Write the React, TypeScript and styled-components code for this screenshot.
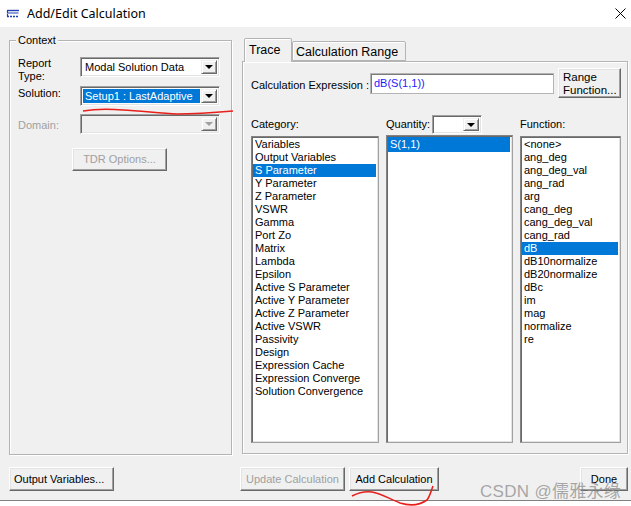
import React from 'react';
import styled, { createGlobalStyle } from 'styled-components';

const GlobalStyle = createGlobalStyle`
  html, body {
    margin: 0;
    padding: 0;
    background: #ffffff;
  }
  body {
    font-family: "Liberation Sans", Arial, sans-serif;
    font-size: 11px;
    color: #000;
  }
  * {
    box-sizing: border-box;
  }
`;

const Window = styled.div`
  position: relative;
  width: 631px;
  height: 506px;
  overflow: hidden;
  background: #fff;
  display: flex;
  flex-direction: column;
`;

const TitleBar = styled.div`
  height: 27px;
  flex-shrink: 0;
  display: flex;
  align-items: center;
  padding: 0 5px 0 6px;
  background: #fff;
`;

const TitleText = styled.span`
  flex: 1;
  margin-left: 7px;
  font-family: "Noto Sans", "Open Sans", sans-serif;
  font-size: 12.5px;
  color: #000;
`;

const Body = styled.div`
  height: 474px;
  flex-shrink: 0;
  background: #f0f0f0;
  border-bottom: 1px solid #808080;
  display: flex;
  flex-direction: column;
`;

const Main = styled.div`
  display: flex;
  padding: 11px 0 0 9px;
`;

const GroupBox = styled.div`
  position: relative;
  flex-shrink: 0;
  width: 223px;
  height: 415px;
  margin-top: 2px;
  border: 1px solid #b4b4b4;
  box-shadow: inset 1px 1px 0 #fff, 1px 1px 0 #fff;
  padding: 16px 0 0 8px;
`;

const Legend = styled.span`
  position: absolute;
  top: -7px;
  left: 6px;
  padding: 0 2px;
  line-height: 13px;
  background: #f0f0f0;
`;

const FormGrid = styled.div`
  display: grid;
  grid-template-columns: 62px 140px;
  grid-template-rows: 20px 20px 20px;
  row-gap: 9px;
`;

const FieldLabel = styled.div<{ $disabled?: boolean; $offset?: number }>`
  line-height: 13px;
  padding-top: ${(p) => p.$offset ?? 0}px;
  white-space: nowrap;
  color: ${(p) => (p.$disabled ? '#a0a0a0' : '#000')};
`;

const Combo = styled.div<{ $disabled?: boolean; $width?: number; $height?: number; $shift?: number }>`
  display: flex;
  flex-shrink: 0;
  width: ${(p) => (p.$width ? `${p.$width}px` : '100%')};
  height: ${(p) => p.$height ?? 20}px;
  margin-top: ${(p) => p.$shift ?? 0}px;
  border-top: 1px solid #a0a0a0;
  border-left: 1px solid #a0a0a0;
  border-right: 1px solid #fff;
  border-bottom: 1px solid #fff;
  box-shadow: inset 1px 1px 0 #696969, inset -1px -1px 0 #e3e3e3;
  background: ${(p) => (p.$disabled ? '#f0f0f0' : '#fff')};
  padding: 2px;
`;

const ComboValue = styled.div<{ $selected?: boolean }>`
  flex: 1;
  display: flex;
  align-items: center;
  padding-left: 2px;
  margin-right: 1px;
  white-space: nowrap;
  overflow: hidden;
  background: ${(p) => (p.$selected ? '#0078d7' : 'transparent')};
  color: ${(p) => (p.$selected ? '#fff' : '#000')};
`;

const ComboArrowBox = styled.div<{ $disabled?: boolean }>`
  width: 16px;
  flex-shrink: 0;
  display: flex;
  align-items: center;
  justify-content: center;
  background: #f0f0f0;
  border-top: 1px solid #f0f0f0;
  border-left: 1px solid #f0f0f0;
  border-right: 1px solid #696969;
  border-bottom: 1px solid #696969;
  box-shadow: inset 1px 1px 0 #fff, inset -1px -1px 0 #a0a0a0;

  &::after {
    content: '';
    width: 0;
    height: 0;
    border-left: 4px solid transparent;
    border-right: 4px solid transparent;
    border-top: 4px solid ${(p) => (p.$disabled ? '#a0a0a0' : '#000')};
  }
`;

const Button = styled.button<{ $width: number; $height?: number; $disabled?: boolean }>`
  width: ${(p) => p.$width}px;
  height: ${(p) => p.$height ?? 24}px;
  flex-shrink: 0;
  margin: 0;
  padding: 0 4px;
  font-family: "Liberation Sans", Arial, sans-serif;
  font-size: 11px;
  line-height: 13px;
  text-align: left;
  white-space: nowrap;
  color: ${(p) => (p.$disabled ? '#a0a0a0' : '#000')};
  background: #f0f0f0;
  border-top: 1px solid #fff;
  border-left: 1px solid #fff;
  border-right: 1px solid #696969;
  border-bottom: 1px solid #696969;
  box-shadow: inset -1px -1px 0 #a0a0a0, inset 1px 1px 0 #e3e3e3;
`;

const CenterButton = styled(Button)`
  text-align: center;
`;

const TdrRow = styled.div`
  margin: 13px 0 0 54px;
`;

const TabArea = styled.div`
  flex-shrink: 0;
  margin-left: 10px;
  width: 386px;
  display: flex;
  flex-direction: column;
`;

const TabStrip = styled.div`
  height: 23px;
  display: flex;
  align-items: flex-end;
  padding-left: 2px;
  position: relative;
  z-index: 1;
`;

const Tab = styled.div<{ $active?: boolean; $width: number }>`
  width: ${(p) => p.$width}px;
  height: ${(p) => (p.$active ? 24 : 20)}px;
  margin-bottom: ${(p) => (p.$active ? -1 : 0)}px;
  padding: ${(p) => (p.$active ? '4px 0 0 4px' : '3px 0 0 3px')};
  font-size: 12.5px;
  line-height: 14px;
  background: #f0f0f0;
  border: 1px solid #b4b4b4;
  border-bottom: ${(p) => (p.$active ? 'none' : '1px solid #b4b4b4')};
  box-shadow: inset 1px 1px 0 #fff;
  border-radius: 2px 2px 0 0;
`;

const TabPanel = styled.div`
  height: 393px;
  border: 1px solid #b4b4b4;
  box-shadow: inset 1px 1px 0 #fff, 1px 1px 0 #fff;
  padding: 6px 0 0 8px;
  display: flex;
  flex-direction: column;
`;

const ExprRow = styled.div`
  height: 30px;
  display: flex;
  align-items: center;
`;

const ExprLabel = styled.div`
  width: 119px;
  flex-shrink: 0;
  padding-top: 3px;
`;

const ExprInput = styled.div`
  width: 184px;
  height: 21px;
  flex-shrink: 0;
  display: flex;
  align-items: center;
  padding-left: 3px;
  background: #fff;
  color: #1c1cff;
  border: 1px solid #b4b4b4;
  box-shadow: inset 1px 1px 0 #7a7a7a;
`;

const RangeButton = styled(Button)`
  margin-left: 4px;
  padding: 2px 4px 0;
  white-space: normal;
  font-size: 11.5px;
`;

const Columns = styled.div`
  margin-top: 17px;
  display: flex;
`;

const Column = styled.div<{ $width: number; $gap: number }>`
  flex-shrink: 0;
  width: ${(p) => p.$width}px;
  margin-right: ${(p) => p.$gap}px;
  display: flex;
  flex-direction: column;
`;

const ColumnHead = styled.div`
  height: 21px;
  display: flex;
  align-items: flex-start;
  padding-top: 3px;
  gap: 2px;
`;

const ListBox = styled.div<{ $top?: number }>`
  height: ${(p) => 307 + (p.$top ?? 0)}px;
  margin-top: ${(p) => -(p.$top ?? 0)}px;
  background: #fff;
  border-top: 1px solid #828282;
  border-left: 1px solid #828282;
  border-right: 1px solid #a0a0a0;
  border-bottom: 1px solid #a0a0a0;
  box-shadow: inset 1px 1px 0 #696969, inset -1px -1px 0 #e3e3e3;
  padding: 1px 2px 0 1px;
  overflow: hidden;
`;

const ListItem = styled.div<{ $selected?: boolean; $row?: number }>`
  height: ${(p) => p.$row ?? 13}px;
  line-height: ${(p) => p.$row ?? 13}px;
  padding-left: 2px;
  white-space: nowrap;
  background: ${(p) => (p.$selected ? '#0078d7' : 'transparent')};
  color: ${(p) => (p.$selected ? '#fff' : '#000')};
`;

const Footer = styled.div`
  display: flex;
  margin-top: 12px;
  padding: 0 3px 0 9px;
`;

const FooterGap = styled.div<{ $width?: number }>`
  width: ${(p) => (p.$width ? `${p.$width}px` : 'auto')};
  flex: ${(p) => (p.$width ? '0 0 auto' : '1')};
`;

const Watermark = styled.div`
  position: absolute;
  left: 480px;
  top: 477px;
  font-family: "Liberation Sans", "Noto Sans CJK SC", sans-serif;
  font-size: 17px;
  letter-spacing: 0.3px;
  color: rgba(140, 140, 140, 0.75);
  pointer-events: none;
  white-space: nowrap;
`;

const Scribble = styled.svg`
  position: absolute;
  left: 0;
  top: 0;
  pointer-events: none;
`;

const categories = [
  'Variables',
  'Output Variables',
  'S Parameter',
  'Y Parameter',
  'Z Parameter',
  'VSWR',
  'Gamma',
  'Port Zo',
  'Matrix',
  'Lambda',
  'Epsilon',
  'Active S Parameter',
  'Active Y Parameter',
  'Active Z Parameter',
  'Active VSWR',
  'Passivity',
  'Design',
  'Expression Cache',
  'Expression Converge',
  'Solution Convergence',
];

const functions = [
  '<none>',
  'ang_deg',
  'ang_deg_val',
  'ang_rad',
  'arg',
  'cang_deg',
  'cang_deg_val',
  'cang_rad',
  'dB',
  'dB10normalize',
  'dB20normalize',
  'dBc',
  'im',
  'mag',
  'normalize',
  're',
];

const AppIcon = () => (
  <svg width="14" height="11" viewBox="0 0 14 11">
    <path d="M1 2.5 H13" stroke="#1f3fb0" strokeWidth="1.4" fill="none" />
    <path d="M1.5 2.5 V5 H12.5" stroke="#1f3fb0" strokeWidth="1.2" fill="none" />
    <path d="M1 8.5 H13" stroke="#1f3fb0" strokeWidth="1.4" strokeDasharray="2 1" fill="none" />
    <path d="M1.5 6 V8.5" stroke="#1f3fb0" strokeWidth="1.2" fill="none" />
  </svg>
);

const CloseIcon = () => (
  <svg width="11" height="11" viewBox="0 0 11 11">
    <path d="M0.5 0.5 L10.5 10.5 M10.5 0.5 L0.5 10.5" stroke="#000" strokeWidth="1" fill="none" />
  </svg>
);

const App = () => {
  return (
    <>
      <GlobalStyle />
      <Window>
        <TitleBar>
          <AppIcon />
          <TitleText>Add/Edit Calculation</TitleText>
          <CloseIcon />
        </TitleBar>
        <Body>
          <Main>
            <GroupBox>
              <Legend>Context</Legend>
              <FormGrid>
                <FieldLabel>
                  Report
                  <br />
                  Type:
                </FieldLabel>
                <Combo>
                  <ComboValue>Modal Solution Data</ComboValue>
                  <ComboArrowBox />
                </Combo>
                <FieldLabel $offset={1}>Solution:</FieldLabel>
                <Combo>
                  <ComboValue $selected>Setup1 : LastAdaptive</ComboValue>
                  <ComboArrowBox />
                </Combo>
                <FieldLabel $disabled $offset={4}>
                  Domain:
                </FieldLabel>
                <Combo $disabled $shift={-1}>
                  <ComboValue />
                  <ComboArrowBox $disabled />
                </Combo>
              </FormGrid>
              <TdrRow>
                <CenterButton $width={95} $height={23} $disabled>
                  TDR Options...
                </CenterButton>
              </TdrRow>
            </GroupBox>

            <TabArea>
              <TabStrip>
                <Tab $active $width={48}>
                  Trace
                </Tab>
                <Tab $width={114}>Calculation Range</Tab>
              </TabStrip>
              <TabPanel>
                <ExprRow>
                  <ExprLabel>Calculation Expression :</ExprLabel>
                  <ExprInput>dB(S(1,1))</ExprInput>
                  <RangeButton $width={63} $height={30}>
                    Range
                    <br />
                    Function...
                  </RangeButton>
                </ExprRow>
                <Columns>
                  <Column $width={128} $gap={7}>
                    <ColumnHead>Category:</ColumnHead>
                    <ListBox>
                      {categories.map((c) => (
                        <ListItem key={c} $selected={c === 'S Parameter'}>
                          {c}
                        </ListItem>
                      ))}
                    </ListBox>
                  </Column>
                  <Column $width={127} $gap={7}>
                    <ColumnHead>
                      Quantity:
                      <Combo $width={50} $height={19} $shift={-3}>
                        <ComboValue />
                        <ComboArrowBox />
                      </Combo>
                    </ColumnHead>
                    <ListBox $top={1}>
                      <ListItem $selected $row={15}>
                        S(1,1)
                      </ListItem>
                    </ListBox>
                  </Column>
                  <Column $width={101} $gap={0}>
                    <ColumnHead>Function:</ColumnHead>
                    <ListBox>
                      {functions.map((f) => (
                        <ListItem key={f} $selected={f === 'dB'}>
                          {f}
                        </ListItem>
                      ))}
                    </ListBox>
                  </Column>
                </Columns>
              </TabPanel>
            </TabArea>
          </Main>

          <Footer>
            <Button $width={105}>Output Variables...</Button>
            <FooterGap $width={126} />
            <CenterButton $width={105} $disabled>
              Update Calculation
            </CenterButton>
            <FooterGap $width={4} />
            <CenterButton $width={90}>Add Calculation</CenterButton>
            <FooterGap />
            <CenterButton $width={48}>Done</CenterButton>
          </Footer>
        </Body>

        <Watermark>CSDN @儒雅永缘</Watermark>

        <Scribble width="631" height="506" viewBox="0 0 631 506">
          <path
            d="M83 111 C95 109 110 109 123 110 C140 111 160 113 177 114 C195 114 210 113 233 111"
            stroke="#e8201c"
            strokeWidth="1.6"
            fill="none"
          />
          <path
            d="M352 496 C358 493 365 491 372 492 C380 493 390 499 400 503 C410 506 420 505 427 500 C430 496 431 491 433 486"
            stroke="#e8201c"
            strokeWidth="1.6"
            fill="none"
          />
        </Scribble>
      </Window>
    </>
  );
};

export default App;
